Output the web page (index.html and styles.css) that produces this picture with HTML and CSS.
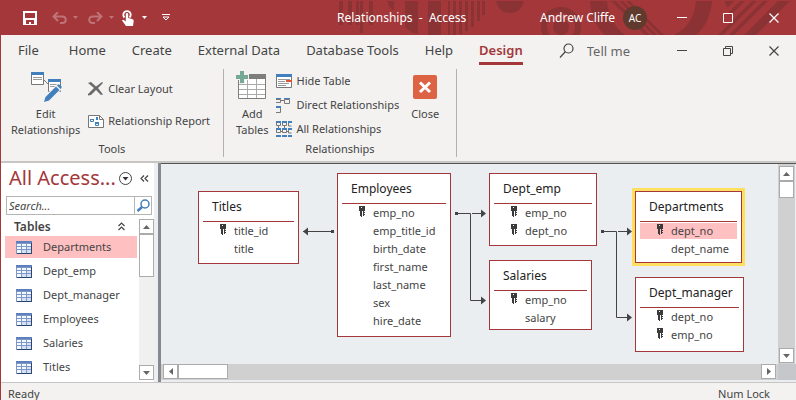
FILE: index.html
```html
<!DOCTYPE html>
<html lang="en">
<head>
<meta charset="utf-8">
<title>Relationships - Access</title>
<link rel="stylesheet" href="styles.css">
</head>
<body>
<svg class="defs" aria-hidden="true">
  <symbol id="key" viewBox="0 0 6 11"><path fill="#3b3b3b" fill-rule="evenodd" d="M0 0h6v5H5v1H4v-1H2v5H1V5H0zM2 1v1h1V1z"/><path fill="#3b3b3b" d="M2 5h1v6H2zM4 5h1v5H4zM5 6h1v1H5zM5 8h1v1H5z"/></symbol>
  <symbol id="sheet" viewBox="0 0 16 13"><path fill="#7f97c6" d="M0 0h16v13H0z"/><path fill="#f4f8ff" d="M1 3h4v2H1zM6 3h4v2H6zM11 3h4v2h-4zM1 6h4v2H1zM6 6h4v2H6zM11 6h4v2h-4zM1 9h4v3H1zM6 9h4v3H6z"/><path fill="#d3dff3" d="M11 6h4v2h-4zM6 9h4v3H6zM11 9h4v3h-4z"/><path fill="#5f80bd" d="M0 0h16v2H0z"/><path fill="#2d4670" d="M15 2h1v11H1v-1h14z"/></symbol>
  <symbol id="min" viewBox="0 0 10 10"><path stroke="currentColor" d="M0 4.5h10"/></symbol>
  <symbol id="x" viewBox="0 0 10 10"><path fill="none" stroke="currentColor" stroke-width="1.2" d="M.5.5l9 9M9.500.5l-9 9"/></symbol>
  <symbol id="lens" viewBox="0 0 16 16"><circle cx="9.500" cy="5.500" r="4.500" fill="none" stroke="currentColor" stroke-width="1.200"/><path stroke="currentColor" stroke-width="1.200" d="M6.500 8.500l-5.500 6"/></symbol>
</svg>

<div class="window">
  <header class="titlebar">
    <svg class="pattern" width="461" height="35" aria-hidden="true">
      <g fill="#8b3234">
        <path d="M4 1h4v24H4zM13 1h4v24h-4zM21 1h3v24h-3zM25 1h3v32h-3zM34 1h4v24h-4z"/>
        <path d="M52 1h7v10q-5-3-7-10zM70 1h13v33q-8-1-13-8zM93 1h13v34H93zM113 1h2v34h-2zM118 1h3v34h-3zM124 1h3v33h-3zM130 1h3v30h-3zM136 1h3v26h-3zM142 1h3v20h-3zM147 1h3v14h-3z"/>
        <path d="M161 1h28q-3 12-14 12T161 1z"/>
        <path d="M255 1h17q2 22 18 34h-20Q256 22 255 1zM276 1h5l34 34h-5zM284 1h4l34 34h-4zM291 1h4l34 34h-4z"/>
        <path d="M361 1h16q-2 22-16 34h-22q20-10 22-34z"/>
        <path d="M390 1h9l-6 6q-3-2-3-6zM405 1h5l-15 15-2-3zM417 1h5l-34 34h-5zM428 1h5l-34 34h-5zM443 1h12l-34 34h-12z"/>
      </g>
      <circle cx="226" cy="27" r="17" fill="none" stroke="#8b3234" stroke-width="6"/><circle cx="226" cy="27" r="8" fill="#8b3234"/>
    </svg>
    <div class="quick">
      <button aria-label="Save"><svg width="14" height="14" viewBox="0 0 14 14"><path fill="#fff" fill-rule="evenodd" d="M0 0h14v14H0zM2 2v5h10V2zM3 9v4h3v-2h2v2h3V9z"/></svg></button>
      <button class="faded undo" aria-label="Undo"><svg width="15" height="12" viewBox="0 0 15 12"><path fill="none" stroke="#fff" stroke-width="2" d="M6 0L1.500 4.500 6 9M2 4.500h8c5 0 5 6.500 0 6.500H8"/></svg></button>
      <button class="faded drop" aria-label="Undo options"><svg width="5" height="3"><path fill="#fff" d="M0 0h5L2.500 3z"/></svg></button>
      <button class="faded redo" aria-label="Redo"><svg width="15" height="12" viewBox="0 0 15 12"><path fill="none" stroke="#fff" stroke-width="2" d="M9 0l4.500 4.500L9 9M13 4.500H5C0 4.500 0 11 5 11h2"/></svg></button>
      <button class="faded drop" aria-label="Redo options"><svg width="5" height="3"><path fill="#fff" d="M0 0h5L2.500 3z"/></svg></button>
      <button class="touch" aria-label="Touch mode"><svg width="12" height="16" viewBox="0 0 12 16"><path fill="none" stroke="#fff" stroke-width="1.800" d="M2.500 7.500a3.700 3.700 0 1 1 5 0"/><path fill="#fff" d="M3.800 3.500q1.200-1 2.400 0V8l4 1q1.500.5 1.500 2L11 16H4L0 10.500q1-1.500 2.500 0l1.300 1z"/></svg></button>
      <button class="drop" aria-label="Touch options"><svg width="5" height="3"><path fill="#fff" d="M0 0h5L2.500 3z"/></svg></button>
      <button class="more" aria-label="Customize toolbar"><svg width="8" height="7"><path fill="none" stroke="#fff" d="M0 .5h8M1 3l3 3 3-3z"/></svg></button>
    </div>
    <span class="caption">Relationships&nbsp; -&nbsp; Access</span>
    <span class="user">Andrew Cliffe</span>
    <span class="avatar">AC</span>
    <div class="controls">
      <button aria-label="Minimize"><svg width="10" height="10"><use href="#min"/></svg></button>
      <button aria-label="Maximize"><svg width="10" height="10"><path fill="none" stroke="currentColor" d="M.5.500h9v9h-9z"/></svg></button>
      <button aria-label="Close window"><svg width="10" height="10"><use href="#x"/></svg></button>
    </div>
  </header>

  <nav class="tabs">
    <div class="tablist">
      <a href="#file" class="file">File</a><a href="#home">Home</a><a href="#create">Create</a><a href="#external">External Data</a><a href="#tools">Database Tools</a><a href="#help">Help</a><a href="#design" class="current">Design</a>
    </div>
    <label class="tell"><svg width="16" height="16"><use href="#lens"/></svg><input type="text" placeholder="Tell me" aria-label="Tell me"></label>
    <div class="controls">
      <button aria-label="Minimize document"><svg width="10" height="10"><use href="#min"/></svg></button>
      <button aria-label="Restore document"><svg width="10" height="10"><path fill="none" stroke="currentColor" d="M.5 2.500h7v7h-7zM2.500 2V.5h7v7H8"/></svg></button>
      <button aria-label="Close document"><svg width="10" height="10"><use href="#x"/></svg></button>
    </div>
  </nav>

  <div class="ribbon">
    <section class="group tools">
      <div class="commands">
        <button class="big"><svg width="32" height="32" viewBox="0 0 32 32"><path fill="#fff" stroke="#777" d="M1.500 1.500h12v12h-12zM18.500 8.500h12v12h-12z"/><path fill="#4180bd" d="M1 1h13v3H1zM18 8h13v3H18z"/><path fill="none" stroke="#999" d="M3 6.500h9M3 8.500h9M20 13.500h9M20 15.500h6"/><path fill="none" stroke="#777" d="M14 9l4 4"/><path fill="#f3f2f1" d="M14 31l1-6L28 12l5 5-13 13z"/><path fill="#4180bd" d="M14 31l1.500-5L26 15.500l3.500 3.500L19 29.500zM27 14.500l1-1q1.500-.5 3 1 1 1.500.5 2.500l-1 1z"/></svg><span>Edit<br>Relationships</span></button>
        <div class="stack loose">
          <button><svg width="16" height="14" viewBox="0 0 16 14"><path fill="#6a6a6a" d="M0 1l3-1 5 4.500L14 0l1 1-5 5 5 6.500-2 .5-5-5-5 5-3 .5V12l6-6z"/></svg>Clear Layout</button>
          <button><svg width="16" height="14" viewBox="0 0 16 14"><path fill="#fff" stroke="#777" d="M.5 1.500h11l4 4v8H.5z"/><path fill="none" stroke="#777" d="M11.500 1.500v4h4"/><path fill="none" stroke="#4180bd" d="M2.500 5.500h3v2h-3zM7.500 9.500h3v2h-3z"/><path fill="#4180bd" d="M2 5h4v1H2zM7 8h4v2H7zM8 3h2v3H8z"/></svg>Relationship Report</button>
        </div>
      </div>
      <h2>Tools</h2>
    </section>
    <section class="group relations">
      <div class="commands">
        <button class="big"><svg width="32" height="32" viewBox="0 0 32 32"><path fill="#fff" stroke="#7d7d7d" d="M2.500 7.500h27v20h-27z"/><path fill="#7d7d7d" d="M2 3h28v5H2z"/><path fill="none" stroke="#aaa" d="M3 13.500h26M3 18.500h26M3 23.500h26M11.500 8v19M20.500 8v19"/><path fill="#f3f2f1" d="M0 0h13v9H9v4H3V9H0z"/><path fill="#75a895" d="M0 4h4V0h4v4h4v4H8v4H4V8H0z"/></svg><span>Add<br>Tables</span></button>
        <div class="stack">
          <button><svg width="16" height="14" viewBox="0 0 16 14"><path fill="#fff" stroke="#777" d="M.5.5h15v13H.5z"/><path fill="#4180bd" d="M0 0h16v3H0z"/><path stroke="#999" d="M2 5.500h12M2 7.500h7M2 9.500h11M2 11.500h8"/><path fill="#dc5430" d="M10 6h6v2h-6z"/></svg>Hide Table</button>
          <button><svg width="16" height="15" viewBox="0 0 16 15"><path fill="none" stroke="#777" d="M0 1.500h4.500v3H0M8.500 1.500h5v4h-5zM5 2.500h3M0 9.500h4.500v5H0"/><path fill="#4180bd" d="M0 0h5v1H0zM8 0h6v1H8zM0 8h5v2H0z"/></svg>Direct Relationships</button>
          <button><svg width="16" height="16" viewBox="0 0 16 16"><path fill="none" stroke="#777" d="M.5 1.500h4v3h-4zM6.500 1.500h4v3h-4zM12.500 1.500h3M12.500 1v4h3M.5 8.500h4v3h-4zM6.500 8.500h4v3h-4zM12.500 8v4h3M2.500 5v2M8.500 5v2M5 10.500h1M11 10.500h1"/><path fill="#4180bd" d="M0 0h5v2H0zM6 0h5v2H6zM12 0h4v2h-4zM0 7h5v2H0zM6 7h5v2H6zM12 7h4v2h-4zM0 14h5v2H0zM6 14h5v2H6zM12 14h4v2h-4z"/></svg>All Relationships</button>
        </div>
        <button class="big"><svg width="32" height="32" viewBox="0 0 32 32"><rect x="4" y="4" width="24" height="24" rx="2" fill="#dc6444"/><path fill="none" stroke="#fff" stroke-width="3" d="M11 11.500l10 9.500M21 11.500l-10 9.500"/></svg><span>Close</span></button>
      </div>
      <h2>Relationships</h2>
    </section>
  </div>

  <main class="workspace">
    <aside class="pane">
      <div class="pane-head"><h1>All Access...</h1>
        <button aria-label="Choose category"><svg width="13" height="13" viewBox="0 0 13 13"><circle cx="6.500" cy="6.500" r="6" fill="#fff" stroke="#444"/><path fill="#333" d="M3.500 5h6l-3 3.500z"/></svg></button>
        <button class="collapse" aria-label="Collapse pane"><svg width="9" height="7" viewBox="0 0 9 7"><path fill="none" stroke="#444" stroke-width="1.200" d="M4 .5l-3 3 3 3M8 .5l-3 3 3 3"/></svg></button>
      </div>
      <div class="search"><input type="text" placeholder="Search..." aria-label="Search objects"><button aria-label="Search"><svg width="13" height="13" viewBox="0 0 13 13"><circle cx="8" cy="5" r="4" fill="#fff" stroke="#4180bd" stroke-width="1.500"/><path stroke="#4180bd" stroke-width="2.500" d="M5 8l-4.500 4"/></svg></button></div>
      <div class="pane-body">
        <div class="list">
          <h3>Tables<svg width="7" height="9" viewBox="0 0 7 9"><path fill="none" stroke="#444" stroke-width="1.200" d="M.5 4l3-3 3 3M.5 8l3-3 3 3"/></svg></h3>
          <a href="#departments" class="selected"><svg width="16" height="13"><use href="#sheet"/></svg>Departments</a>
          <a href="#dept_emp"><svg width="16" height="13"><use href="#sheet"/></svg>Dept_emp</a>
          <a href="#dept_manager"><svg width="16" height="13"><use href="#sheet"/></svg>Dept_manager</a>
          <a href="#employees"><svg width="16" height="13"><use href="#sheet"/></svg>Employees</a>
          <a href="#salaries"><svg width="16" height="13"><use href="#sheet"/></svg>Salaries</a>
          <a href="#titles"><svg width="16" height="13"><use href="#sheet"/></svg>Titles</a>
        </div>
        <div class="vbar pane-bar">
          <button aria-label="Scroll list up"><svg width="7" height="4"><path d="M0 4h7L3.500 0z"/></svg></button><i class="thumb"></i><button aria-label="Scroll list down"><svg width="7" height="4"><path d="M0 0h7L3.500 4z"/></svg></button>
        </div>
      </div>
    </aside>
    <div class="splitter"></div>
    <div class="view">
      <div class="canvas">
        <svg class="links" width="618" height="199" aria-hidden="true">
          <g fill="none" stroke="#444"><path d="M142 67.500h30M295 49.500h14.500V136.500H324M311 49.500h13M441 67.500h14.500V153.500H470M457 67.500h13"/></g>
          <path fill="#444" d="M142 67.500l5-4v8zM325 49.500l-5-4v8zM325 136.500l-5-4v8zM471 67.500l-5-4v8zM471 153.500l-5-4v8zM170 66h3v3h-3zM294 48h3v3h-3zM440 66h3v3h-3z"/>
        </svg>
        <section class="node titles"><h4>Titles</h4><ul><li class="pk"><svg><use href="#key"/></svg>title_id</li><li>title</li></ul></section>
        <section class="node employees"><h4>Employees</h4><ul><li class="pk"><svg><use href="#key"/></svg>emp_no</li><li>emp_title_id</li><li>birth_date</li><li>first_name</li><li>last_name</li><li>sex</li><li>hire_date</li></ul></section>
        <section class="node dept-emp"><h4>Dept_emp</h4><ul><li class="pk"><svg><use href="#key"/></svg>emp_no</li><li class="pk"><svg><use href="#key"/></svg>dept_no</li></ul></section>
        <section class="node salaries"><h4>Salaries</h4><ul><li class="pk"><svg><use href="#key"/></svg>emp_no</li><li>salary</li></ul></section>
        <section class="node departments"><h4>Departments</h4><ul><li class="pk picked"><svg><use href="#key"/></svg>dept_no</li><li>dept_name</li></ul></section>
        <section class="node dept-manager"><h4>Dept_manager</h4><ul><li class="pk"><svg><use href="#key"/></svg>dept_no</li><li class="pk"><svg><use href="#key"/></svg>emp_no</li></ul></section>
      </div>
      <div class="vbar view-bar">
        <button aria-label="Scroll up"><svg width="7" height="4"><path d="M0 4h7L3.500 0z"/></svg></button><i class="thumb"></i><button aria-label="Scroll down"><svg width="7" height="4"><path d="M0 0h7L3.500 4z"/></svg></button>
      </div>
      <div class="hbar">
        <button aria-label="Scroll left"><svg width="4" height="7"><path d="M4 0v7L0 3.500z"/></svg></button><i class="thumb"></i><button aria-label="Scroll right"><svg width="4" height="7"><path d="M0 0v7l4-3.500z"/></svg></button>
      </div>
      <div class="corner"></div>
    </div>
  </main>
  <footer class="status"><span>Ready</span><span>Num Lock</span></footer>
</div>
</body>
</html>
```
FILE: styles.css
```css
* { box-sizing: border-box; }
body { margin: 0; font: 12px/18px "Noto Sans", "Open Sans", sans-serif; color: #444; }
button, input { font: inherit; color: inherit; padding: 0; border: 0; background: none; }
h1, h2, h3, h4, ul { margin: 0; padding: 0; font-weight: 400; list-style: none; }
a { color: inherit; text-decoration: none; }
svg { display: block; flex: none; }
.defs { position: absolute; width: 0; height: 0; }

.window { display: flex; flex-direction: column; height: 100vh; min-height: 400px; overflow: hidden; border-left: 1px solid #a4373a; background: #f3f2f1; }

.titlebar { position: relative; display: flex; align-items: center; height: 35px; flex: none; background: #a4373a; color: #fff; }
.titlebar > * { position: relative; }
.titlebar .pattern { position: absolute; right: 0; top: 0; }
.quick { display: flex; align-items: center; width: 336px; padding-left: 22px; }
.quick button { display: flex; }
.faded { opacity: .3; }
.quick .undo { margin-left: 15px; }
.quick .drop { margin-left: 6px; }
.quick .redo { margin-left: 10px; }
.quick .touch { margin-left: 8px; }
.quick .touch + .drop { margin-left: 8px; }
.quick .more { margin-left: 15px; }
.caption { width: 203px; white-space: nowrap; }
.user { width: 83px; white-space: nowrap; }
.avatar { width: 24px; height: 24px; border-radius: 50%; background: #603a2e; font-size: 10px; line-height: 24px; text-align: center; }
.controls { display: flex; gap: 36px; margin-left: auto; padding-right: 17px; }
.controls button { display: flex; }

.tabs { display: flex; align-items: center; height: 31px; flex: none; font-size: 13px; }
.tablist { display: flex; gap: 26px; padding-left: 17px; white-space: nowrap; }
.tablist a { height: 28px; padding-top: 3px; line-height: 20px; border-bottom: 3px solid transparent; }
.tablist .file { margin-right: 4px; }
.tablist .current { border-color: #a4373a; color: #a4373a; font-weight: 600; }
.tell { display: flex; align-items: center; gap: 12px; margin-left: 36px; }
.tell input { width: 60px; }
.tell input::placeholder { color: #666; opacity: 1; }

.ribbon { display: flex; height: 97px; flex: none; padding-top: 3px; border-bottom: 2px solid #c8c6c4; font-size: 11px; }
.group { display: flex; flex-direction: column; height: 88px; border-right: 1px solid #b3b0ad; }
.tools { width: 223px; }
.relations { width: 233px; }
.tools .commands { padding-left: 10px; }
.relations .commands { padding-left: 12px; }
.group h2 { font-size: 11px; line-height: 16px; text-align: center; }
.commands { display: flex; flex: 1; align-items: flex-start; gap: 8px; }
.commands button { display: flex; align-items: center; white-space: nowrap; }
.commands .big { flex-direction: column; padding-top: 2px; line-height: 16px; }
.big span { margin-top: 3px; }
.stack { display: flex; flex-direction: column; gap: 6px; padding-top: 3px; }
.stack + .big { margin-left: 2px; }
.stack.loose { gap: 14px; padding-top: 11px; }
.stack button { gap: 4px; height: 18px; }

.workspace { display: flex; flex: 1; min-height: 0; }
.pane { display: flex; flex-direction: column; width: 153px; flex: none; background: #fff; }
.pane-head { display: flex; align-items: center; height: 33px; padding: 0 5px 3px 8px; }
.pane-head h1 { flex: 1; min-width: 0; font-size: 20px; line-height: 30px; color: #a4373a; white-space: nowrap; }
.pane-head button { display: flex; }
.pane-head .collapse { margin-left: 8px; }
.search { display: flex; height: 19px; margin: 0 2px 0 5px; border: 1px solid #b5b5b5; flex: none; }
.search input { width: 0; flex: 1; padding-left: 2px; font-size: 11px; }
.search input::placeholder { color: #444; font-style: italic; opacity: 1; }
.search button { display: flex; align-items: center; justify-content: center; width: 17px; border-left: 1px solid #b5b5b5; }
.pane-body { display: flex; flex: 1; min-height: 0; padding-top: 4px; }
.list { flex: 1; padding-left: 4px; }
.list h3 { display: flex; align-items: center; justify-content: space-between; height: 17px; padding: 0 14px 2px 9px; font-size: 12px; line-height: 14px; font-weight: 600; }
.list a { display: flex; align-items: center; gap: 11px; height: 22px; margin: 0 2px 2px 0; padding-left: 11px; font-size: 11px; }
.list .selected { background: #ffc0c2; }
.vbar, .hbar { display: flex; background: #d0d0d0; }
.vbar { flex-direction: column; }
.vbar button, .hbar button { display: flex; align-items: center; justify-content: center; width: 15px; height: 15px; flex: none; border: 1px solid #ababab; background: #fff; fill: #666; }
.thumb { flex: none; border: 1px solid #ababab; background: #fff; }
.vbar button:last-child { margin-top: auto; }
.hbar button:last-child { margin-left: auto; }
.pane-bar { width: 15px; margin-bottom: 2px; background: #f0f0f0; }
.pane-bar .thumb { height: 43px; }
.splitter { width: 7px; flex: none; border-left: 4px solid #eceff1; background: #868a90; }
.view { display: grid; grid-template-columns: 1fr 18px; grid-template-rows: 1fr 18px; flex: 1; min-width: 0; border-top: 1px solid #555; background: #ebeef1; }
.canvas { position: relative; overflow: hidden; }
.view-bar { padding: 2px 1px 1px; border-right: 1px solid #ebeef1; }
.view-bar .thumb { height: 17px; }
.hbar { padding: 0 2px 1px; border-bottom: 2px solid #ebeef1; }
.hbar .thumb { width: 50px; }
.corner { background: #c6c7cb; border-bottom: 2px solid #ebeef1; }

.links { position: absolute; left: 0; top: 0; }
.node { position: absolute; padding: 0 4px; border: 1px solid #a4373a; background: #fff; }
.node h4 { height: 30px; padding-left: 9px; border-bottom: 1px solid #a4373a; font-size: 12px; line-height: 30px; color: #222; white-space: nowrap; }
.node li { position: relative; height: 16px; margin: 1px 0 2px; padding-left: 31px; font-size: 11px; line-height: 16px; white-space: nowrap; }
.node li svg { position: absolute; left: 17px; top: 1px; width: 6px; height: 11px; }
.picked { background: #ffc0c2; }
.titles { left: 37px; top: 27px; width: 101px; height: 73px; }
.employees { left: 176px; top: 9px; width: 114px; height: 164px; }
.dept-emp { left: 328px; top: 9px; width: 108px; height: 73px; }
.salaries { left: 328px; top: 96px; width: 103px; height: 70px; }
.departments { left: 474px; top: 27px; width: 107px; height: 72px; box-shadow: 0 0 0 3px #ffdf60; }
.dept-manager { left: 474px; top: 113px; width: 109px; height: 75px; }

.status { display: flex; justify-content: space-between; height: 18px; flex: none; padding: 0 26px 0 7px; border-top: 1px solid #c8c6c4; font-size: 11px; line-height: 22px; overflow: hidden; }
```
